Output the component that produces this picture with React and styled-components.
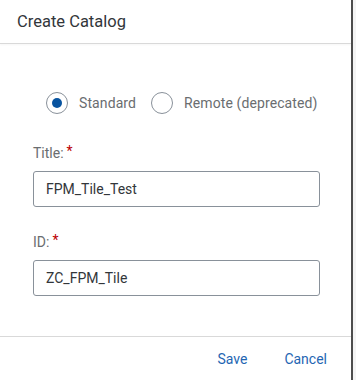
import React from 'react';
import styled, { createGlobalStyle } from 'styled-components';

const GlobalStyle = createGlobalStyle`
  html, body {
    margin: 0;
    padding: 0;
    background: #ffffff;
  }
  body {
    font-family: Roboto, "Noto Sans", Arial, sans-serif;
  }
`;

const Screen = styled.div`
  width: 356px;
  height: 380px;
  display: flex;
  background: #f4f4f4;
`;

const Dialog = styled.div`
  width: 353px;
  height: 380px;
  background: #ffffff;
  border-right: 2px solid #4d4d4d;
  display: flex;
  flex-direction: column;
  box-sizing: border-box;
`;

const Header = styled.div`
  height: 43px;
  flex: none;
  display: flex;
  align-items: center;
  padding-left: 17px;
  border-bottom: 1px solid #d9d9d9;
  box-shadow: 0 1px 2px rgba(0, 0, 0, 0.04);
`;

const Title = styled.h1`
  margin: 0;
  font-size: 16.5px;
  font-weight: 400;
  color: #32363a;
`;

const Content = styled.div`
  flex: 1;
  padding: 48px 33px 0 33px;
  display: flex;
  flex-direction: column;
`;

const RadioGroup = styled.div`
  display: flex;
  align-items: center;
  padding-left: 13px;
  gap: 15px;
  margin-bottom: 29px;
  white-space: nowrap;
`;

const RadioOption = styled.label`
  display: flex;
  align-items: center;
  gap: 11px;
  font-size: 14px;
  letter-spacing: 0.1px;
  color: #6a6d70;
  flex: none;
`;

const RadioCircle = styled.span`
  width: 22px;
  height: 22px;
  box-sizing: border-box;
  border: 1px solid #89919a;
  border-radius: 50%;
  display: flex;
  align-items: center;
  justify-content: center;

  &::after {
    content: '';
    width: 10px;
    height: 10px;
    border-radius: 50%;
    background: ${(p) => (p.$checked ? '#0854a0' : 'transparent')};
  }
`;

const Field = styled.div`
  display: flex;
  flex-direction: column;
  margin-bottom: 25px;
`;

const Label = styled.div`
  font-size: 14px;
  color: #6a6d70;
  height: 20px;
  margin-bottom: 8px;
  display: flex;
  align-items: center;
`;

const Required = styled.span`
  color: #bb0000;
  margin-left: 3px;
  font-size: 14px;
  position: relative;
  top: -2px;
`;

const Input = styled.div`
  width: 287px;
  height: 36px;
  box-sizing: border-box;
  border: 1px solid #89919a;
  border-radius: 3px;
  padding-left: 12px;
  display: flex;
  align-items: center;
  font-size: 14px;
  color: #32363a;
`;

const Footer = styled.div`
  height: 44px;
  flex: none;
  border-top: 1px solid #d9d9d9;
  display: flex;
  align-items: center;
  justify-content: flex-end;
  padding-right: 24px;
  gap: 37px;
  box-sizing: border-box;
`;

const LinkButton = styled.button`
  background: none;
  border: none;
  padding: 0;
  font-family: inherit;
  font-size: 14px;
  color: #1f66b3;
  cursor: pointer;
`;

export default function App() {
  return (
    <>
      <GlobalStyle />
      <Screen>
        <Dialog>
          <Header>
            <Title>Create Catalog</Title>
          </Header>
          <Content>
            <RadioGroup>
              <RadioOption>
                <RadioCircle $checked />
                Standard
              </RadioOption>
              <RadioOption>
                <RadioCircle />
                Remote (deprecated)
              </RadioOption>
            </RadioGroup>
            <Field>
              <Label>
                Title:<Required>*</Required>
              </Label>
              <Input>FPM_Tile_Test</Input>
            </Field>
            <Field>
              <Label>
                ID:<Required>*</Required>
              </Label>
              <Input>ZC_FPM_Tile</Input>
            </Field>
          </Content>
          <Footer>
            <LinkButton>Save</LinkButton>
            <LinkButton>Cancel</LinkButton>
          </Footer>
        </Dialog>
      </Screen>
    </>
  );
}
